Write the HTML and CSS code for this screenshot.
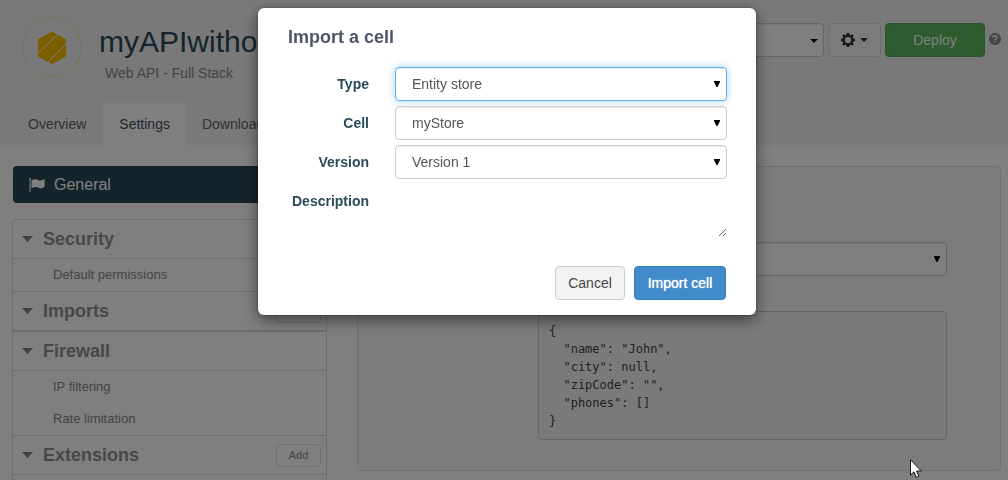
FILE: index.html
```html
<!DOCTYPE html>
<html lang="en">
<head>
<meta charset="utf-8">
<meta name="viewport" content="width=device-width, initial-scale=1">
<title>Import a cell</title>
<link rel="stylesheet" href="styles.css">
</head>
<body>
<header class="page-header">
  <div class="header-top">
    <svg class="logo" viewBox="0 0 60 60" aria-hidden="true">
      <circle cx="30" cy="30" r="29.3" fill="none" stroke="#f3e6c0" stroke-width="1.2"/>
      <path d="M30 14.700 44 22V39.500L30 47 16 39.500V22Z" fill="#f8bc00"/>
      <path d="M15 37 37 16.500M25 46 46 25" stroke="#fff" stroke-width="1"/>
    </svg>
    <div class="heading">
      <h1 class="title">myAPIwithout</h1>
      <p class="subtitle">Web API - Full Stack</p>
    </div>
    <div class="actions">
      <div class="select-box version-box">
        <select class="select" aria-label="Version"><option></option></select>
        <svg class="caret version-caret" viewBox="0 0 8 4" aria-hidden="true"><path d="M0 0H8L4 4Z"/></svg>
      </div>
      <button class="btn btn-gear" type="button" aria-label="Options">
        <svg class="gear" viewBox="0 0 14 14" aria-hidden="true">
          <path fill-rule="evenodd" d="M5.8 0H8.2L8.6 1.8 9.6 2.2 11.2 1.2 12.8 2.8 11.8 4.4 12.2 5.4 14 5.8V8.2L12.2 8.6 11.8 9.6 12.8 11.2 11.2 12.8 9.6 11.8 8.6 12.2 8.2 14H5.8L5.4 12.2 4.4 11.8 2.8 12.8 1.2 11.2 2.2 9.6 1.8 8.6 0 8.2V5.8L1.8 5.4 2.2 4.4 1.2 2.8 2.8 1.2 4.4 2.2 5.4 1.8ZM7 3.9A3.1 3.1 0 1 0 7 10.100A3.1 3.1 0 1 0 7 3.900Z"/>
        </svg>
        <svg class="caret" viewBox="0 0 8 4" aria-hidden="true"><path d="M0 0H8L4 4Z"/></svg>
      </button>
      <button class="btn btn-deploy" type="button">Deploy</button>
      <svg class="help" viewBox="0 0 12 12" aria-hidden="true">
        <circle cx="6" cy="6" r="6" fill="#8a8a8a"/>
        <path d="M4 4.700C4 2.300 8 2.300 8 4.500 8 5.800 6 5.800 6 7.300" fill="none" stroke="#f2f2f2" stroke-width="1.600"/>
        <path d="M5.200 8.200H6.800V9.800H5.200Z" fill="#f2f2f2"/>
      </svg>
    </div>
  </div>
  <nav class="tabs">
    <a class="tab" href="#overview">Overview</a>
    <a class="tab tab-active" href="#settings">Settings</a>
    <a class="tab" href="#downloads">Downloads</a>
  </nav>
</header>

<main class="content">
  <aside class="sidebar">
    <a class="general" href="#general">
      <svg class="flag" viewBox="0 0 16 14" aria-hidden="true">
        <path d="M0 1A1 1 0 0 1 2 1L1.500 2V14H.500V2ZM2.500 2.500C5 .500 7 1 9 2 11.500 3.200 13.500 2 15.600 1V9C12.500 10.800 11 10.600 9 9.600 7 8.600 5 8.800 2.500 10.300Z" fill="#fff"/>
      </svg>
      General
    </a>
    <div class="sections">
      <section>
        <h2 class="section-head"><svg class="arrow" viewBox="0 0 11 6" aria-hidden="true"><path d="M0 0H11L5.500 6Z"/></svg>Security</h2>
        <ul class="items"><li><a class="item" href="#permissions">Default permissions</a></li></ul>
      </section>
      <section>
        <h2 class="section-head"><svg class="arrow" viewBox="0 0 11 6" aria-hidden="true"><path d="M0 0H11L5.500 6Z"/></svg>Imports<button class="add" type="button">Add</button></h2>
        <ul class="items"></ul>
      </section>
      <section>
        <h2 class="section-head"><svg class="arrow" viewBox="0 0 11 6" aria-hidden="true"><path d="M0 0H11L5.500 6Z"/></svg>Firewall</h2>
        <ul class="items">
          <li><a class="item" href="#ip">IP filtering</a></li>
          <li><a class="item" href="#rate">Rate limitation</a></li>
        </ul>
      </section>
      <section>
        <h2 class="section-head"><svg class="arrow" viewBox="0 0 11 6" aria-hidden="true"><path d="M0 0H11L5.500 6Z"/></svg>Extensions<button class="add" type="button">Add</button></h2>
        <ul class="items items-last"></ul>
      </section>
    </div>
  </aside>
  <section class="panel">
    <div class="select-box">
      <select class="select" aria-label="Format"><option></option></select>
      <svg class="select-arrow" viewBox="0 0 6 6" aria-hidden="true"><path d="M0 0H6V1L3.500 6H2.500L0 1Z"/></svg>
    </div>
    <pre class="code">{
  "name": "John",
  "city": null,
  "zipCode": "",
  "phones": []
}</pre>
  </section>
</main>

<div class="backdrop">
  <form class="modal" role="dialog" aria-labelledby="dialog-title">
    <h2 class="modal-title" id="dialog-title">Import a cell</h2>
    <div class="fields">
      <label class="label" for="type">Type</label>
      <div class="select-box">
        <select class="select select-focus" id="type"><option>Entity store</option></select>
        <svg class="select-arrow" viewBox="0 0 6 6" aria-hidden="true"><path d="M0 0H6V1L3.500 6H2.500L0 1Z"/></svg>
      </div>
      <label class="label" for="cell">Cell</label>
      <div class="select-box">
        <select class="select" id="cell"><option>myStore</option></select>
        <svg class="select-arrow" viewBox="0 0 6 6" aria-hidden="true"><path d="M0 0H6V1L3.500 6H2.500L0 1Z"/></svg>
      </div>
      <label class="label" for="version">Version</label>
      <div class="select-box">
        <select class="select" id="version"><option>Version 1</option></select>
        <svg class="select-arrow" viewBox="0 0 6 6" aria-hidden="true"><path d="M0 0H6V1L3.500 6H2.500L0 1Z"/></svg>
      </div>
      <label class="label" for="description">Description</label>
      <textarea class="description" id="description"></textarea>
    </div>
    <div class="modal-actions">
      <button class="btn btn-cancel" type="button">Cancel</button>
      <button class="btn btn-primary" type="submit">Import cell</button>
    </div>
  </form>
</div>
<svg class="pointer" viewBox="0 0 12 19" aria-hidden="true">
  <path d="M.500.800V16L4 12.800 6.300 18.300 8.800 17.200 6.500 12H11.300Z" fill="#fff" stroke="#1a1426" stroke-width="1"/>
</svg>
</body>
</html>
```

FILE: styles.css
```css
* { box-sizing: border-box; }

body {
  margin: 0;
  height: 100vh;
  overflow: hidden;
  background: #fff;
  color: #555;
  font: 14px/20px "Liberation Sans", Arial, sans-serif;
}

h1, h2, p, ul, pre { margin: 0; padding: 0; }
ul { list-style: none; }
a { color: inherit; text-decoration: none; }
button, select, textarea { font: inherit; color: inherit; }

.page-header {
  display: flex;
  flex-direction: column;
  justify-content: space-between;
  height: 145px;
  padding: 17px 7px 0 12px;
  background: #f2f2f2;
}
.header-top { display: flex; align-items: flex-start; }
.logo { flex: none; width: 60px; height: 60px; margin-left: 10px; }
.heading { flex: 1; min-width: 0; padding: 7px 0 0 17px; }
.title { color: #264959; font-size: 30px; line-height: 36px; font-weight: 400; }
.subtitle { margin: 3px 0 0 6px; color: #888; }
.actions { display: flex; gap: 4px; padding-top: 6px; }
.version-box { width: 200px; }

.btn {
  height: 34px;
  padding: 0 12px;
  border: 1px solid #ccc;
  border-radius: 4px;
  background: #fff;
}
.btn-gear {
  display: flex;
  align-items: center;
  gap: 5px;
  border-color: #dcdcdc;
  background: #f6f6f6;
}
.gear { width: 14px; height: 14px; fill: #333; }
.caret { width: 8px; height: 4px; fill: #333; }
.version-caret { position: absolute; top: 16px; right: 6px; fill: #111; }
.btn-deploy { width: 100px; border-color: #4cae4c; background: #5cb85c; color: #fff; }
.help { width: 12px; height: 12px; margin-top: 10px; }

.tabs { display: flex; }
.tab { padding: 11px 16px; border-radius: 4px 4px 0 0; color: #666; }
.tab-active { margin-left: 1px; background: #fff; color: #444f5c; }

.content {
  display: grid;
  grid-template-columns: 315px 1fr;
  align-items: start;
  gap: 30px;
  padding: 21px 7px 0 12px;
}
.general {
  display: flex;
  align-items: center;
  gap: 9px;
  height: 37px;
  margin-left: 1px;
  padding: 0 16px;
  border-radius: 4px;
  background: #294856;
  color: #fff;
  font-size: 16px;
}
.flag { width: 16px; height: 14px; }
.sections { margin-top: 16px; border: 1px solid #ddd; border-radius: 4px; }
.section-head {
  display: flex;
  align-items: center;
  height: 39px;
  padding: 0 5px 0 9px;
  border-bottom: 1px solid #ddd;
  color: #909090;
  font-size: 18px;
}
.arrow { width: 11px; height: 6px; margin-right: 10px; fill: #808080; }
.add {
  width: 45px;
  height: 23px;
  margin-left: auto;
  padding: 0;
  border: 1px solid #ddd;
  border-radius: 4px;
  background: #fff;
  color: #888;
  font-size: 11px;
  font-weight: 400;
}
.items { border-bottom: 1px solid #ddd; }
.items-last { padding-bottom: 32px; }
.item { display: block; padding: 6px 40px; color: #888; font-size: 13px; }

.panel {
  padding: 75px 53px 30px 180px;
  border: 1px solid #e3e3e3;
  border-radius: 4px;
  background: #f9f9f9;
}
.code {
  margin-top: 35px;
  padding: 10px 10px 9px;
  border: 1px solid #ccc;
  border-radius: 4px;
  background: #f5f5f5;
  color: #444;
  font: 12px/18px "DejaVu Sans Mono", monospace;
}

.select-box { position: relative; }
.select {
  display: block;
  width: 100%;
  height: 34px;
  padding: 0 30px 0 16px;
  border: 1px solid #ccc;
  border-radius: 4px;
  background: #fff;
  box-shadow: inset 0 1px 1px rgba(0, 0, 0, .08);
  appearance: none;
}
.select-focus {
  border-color: #66afe9;
  box-shadow: inset 0 1px 1px rgba(0, 0, 0, .08), 0 0 8px rgba(102, 175, 233, .6);
}
.select-arrow { position: absolute; top: 14px; right: 7px; width: 6px; height: 6px; fill: #000; }

.backdrop {
  position: fixed;
  inset: 0;
  display: flex;
  justify-content: center;
  align-items: flex-start;
  padding: 8px 0 0 6px;
  background: rgba(0, 0, 0, .5);
}
.modal {
  width: 100%;
  max-width: 498px;
  padding: 19px 29px 15px 30px;
  border-radius: 6px;
  background: #fff;
  box-shadow: 0 5px 15px rgba(0, 0, 0, .5), 0 0 2px rgba(0, 0, 0, .5);
}
.modal-title { color: #4f566b; font-size: 18px; line-height: 20px; }
.fields {
  display: grid;
  grid-template-columns: 81px 1fr;
  gap: 5px 26px;
  margin-top: 20px;
}
.label { padding-top: 7px; color: #2b4a59; font-weight: 700; text-align: right; }
.description {
  width: 100%;
  height: 53px;
  padding: 6px 12px;
  border: 0;
  background: #fff;
  resize: vertical;
}
.modal-actions { display: flex; justify-content: flex-end; gap: 9px; margin: 29px 1px 0 0; }
.btn-cancel { min-width: 70px; background: #f3f3f3; color: #444; }
.btn-primary { min-width: 92px; border-color: #357ebd; background: #428bca; color: #fff; text-shadow: 0 0 1px #fff; }

.pointer { position: absolute; left: 910px; top: 459px; width: 12px; height: 19px; }
```
